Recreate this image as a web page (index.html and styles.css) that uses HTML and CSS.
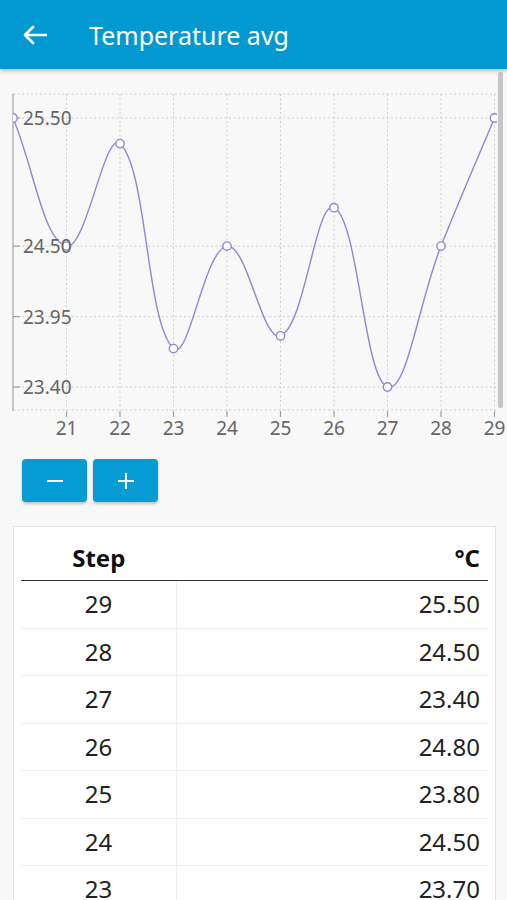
FILE: index.html
```html
<!DOCTYPE html>
<html lang="en">

<head>
    <meta charset="UTF-8">
    <meta name="viewport" content="width=device-width, initial-scale=1.0">
    <title>Temperature avg</title>

    <link rel="stylesheet" href="styles.css">
</head>

<body>
    <header class="topbar">
        <svg class="back-icon" width="24" height="20" viewBox="0 0 24 20" aria-label="Back">
            <path d="M2 10H23M10 2L2 10L10 18" />
        </svg>
        <h1 class="title">Temperature avg</h1>
    </header>

    <main class="content">
        <!-- chart: x 20..29 -> 13..494.5, y 25.5 -> 118, 23.4 -> 387 -->
        <svg class="chart" width="507" height="376" viewBox="0 69 507 376">
            <defs>
                <clipPath id="plotClip">
                    <rect x="13" y="69" width="484" height="376" />
                </clipPath>
            </defs>

            <g class="grid">
                <line x1="13" y1="94" x2="496" y2="94" />
                <line x1="13" y1="118" x2="496" y2="118" />
                <line x1="13" y1="246.1" x2="496" y2="246.1" />
                <line x1="13" y1="316.6" x2="496" y2="316.6" />
                <line x1="13" y1="387" x2="496" y2="387" />
                <line x1="13" y1="410" x2="496" y2="410" />
                <line x1="66.5" y1="94" x2="66.5" y2="410" />
                <line x1="120" y1="94" x2="120" y2="410" />
                <line x1="173.5" y1="94" x2="173.5" y2="410" />
                <line x1="227" y1="94" x2="227" y2="410" />
                <line x1="280.5" y1="94" x2="280.5" y2="410" />
                <line x1="334" y1="94" x2="334" y2="410" />
                <line x1="387.5" y1="94" x2="387.5" y2="410" />
                <line x1="441" y1="94" x2="441" y2="410" />
                <line x1="494.5" y1="94" x2="494.5" y2="410" />
            </g>

            <line class="axis" x1="13" y1="94" x2="13" y2="411" />
            <g class="ticks">
                <line x1="13" y1="118" x2="20" y2="118" />
                <line x1="13" y1="246.1" x2="20" y2="246.1" />
                <line x1="13" y1="316.6" x2="20" y2="316.6" />
                <line x1="13" y1="387" x2="20" y2="387" />
                <line x1="66.5" y1="411" x2="66.5" y2="417" />
                <line x1="120" y1="411" x2="120" y2="417" />
                <line x1="173.5" y1="411" x2="173.5" y2="417" />
                <line x1="227" y1="411" x2="227" y2="417" />
                <line x1="280.5" y1="411" x2="280.5" y2="417" />
                <line x1="334" y1="411" x2="334" y2="417" />
                <line x1="387.5" y1="411" x2="387.5" y2="417" />
                <line x1="441" y1="411" x2="441" y2="417" />
                <line x1="494.5" y1="411" x2="494.5" y2="417" />
            </g>

            <g class="series" clip-path="url(#plotClip)">
                <path class="series-line" d="M13,118 C34.4,169.2 43.2,240.5 66.5,246.1 C86,250.8 104.9,129.1 120,143.6 C147.7,170.1 145.8,322.1 173.5,348.6 C188.6,363.1 204.5,248.8 227,246.1 C247.3,243.7 262.1,342.4 280.5,335.8 C304.9,327 315.8,199 334,207.7 C358.6,219.5 363.8,378.5 387.5,387 C406.6,393.9 418.7,302.1 441,246.1 C461.5,194.5 473.1,169.2 494.5,118" />
                <circle cx="13" cy="118" r="4.2" />
                <circle cx="66.5" cy="246.1" r="4.2" />
                <circle cx="120" cy="143.6" r="4.2" />
                <circle cx="173.5" cy="348.6" r="4.2" />
                <circle cx="227" cy="246.1" r="4.2" />
                <circle cx="280.5" cy="335.8" r="4.2" />
                <circle cx="334" cy="207.7" r="4.2" />
                <circle cx="387.5" cy="387" r="4.2" />
                <circle cx="441" cy="246.1" r="4.2" />
                <circle cx="494.5" cy="118" r="4.2" />
            </g>

            <g class="y-labels">
                <text x="23" y="125.3">25.50</text>
                <text x="23" y="253.2">24.50</text>
                <text x="23" y="323.6">23.95</text>
                <text x="23" y="394">23.40</text>
            </g>
            <g class="x-labels">
                <text x="66.5" y="435">21</text>
                <text x="120" y="435">22</text>
                <text x="173.5" y="435">23</text>
                <text x="227" y="435">24</text>
                <text x="280.5" y="435">25</text>
                <text x="334" y="435">26</text>
                <text x="387.5" y="435">27</text>
                <text x="441" y="435">28</text>
                <text x="494.5" y="435">29</text>
            </g>
        </svg>

        <div class="zoom-buttons">
            <button type="button" class="zoom-btn" aria-label="Zoom out">
                <svg width="16" height="16" viewBox="0 0 16 16"><path d="M0 8H16" /></svg>
            </button>
            <button type="button" class="zoom-btn" aria-label="Zoom in">
                <svg width="16" height="16" viewBox="0 0 16 16"><path d="M0 8H16M8 0V16" /></svg>
            </button>
        </div>

        <div class="table-card">
            <table class="data-table">
                <thead>
                    <tr>
                        <th class="col-step">Step</th>
                        <th class="col-value">°C</th>
                    </tr>
                </thead>
                <tbody>
                    <tr><td class="col-step">29</td><td class="col-value">25.50</td></tr>
                    <tr><td class="col-step">28</td><td class="col-value">24.50</td></tr>
                    <tr><td class="col-step">27</td><td class="col-value">23.40</td></tr>
                    <tr><td class="col-step">26</td><td class="col-value">24.80</td></tr>
                    <tr><td class="col-step">25</td><td class="col-value">23.80</td></tr>
                    <tr><td class="col-step">24</td><td class="col-value">24.50</td></tr>
                    <tr><td class="col-step">23</td><td class="col-value">23.70</td></tr>
                </tbody>
            </table>
        </div>
    </main>

    <div class="scroll-thumb"></div>
</body>

</html>
```

FILE: styles.css
```css
body {
    margin: 0;
    background-color: #f8f8f8;
    font-family: "Noto Sans", "Open Sans", sans-serif;
    color: #222;
    overflow: hidden;
}

.topbar {
    position: relative;
    z-index: 2;
    height: 69px;
    display: flex;
    align-items: center;
    background-color: #0299d0;
    box-shadow: 0 2px 4px rgba(0, 0, 0, 0.25);
}

.back-icon {
    margin-left: 23px;
    fill: none;
    stroke: #fff;
    stroke-width: 2.6;
    stroke-linecap: round;
    stroke-linejoin: round;
}

.title {
    margin: 0 0 0 42px;
    font-size: 25px;
    font-weight: normal;
    color: #fff;
}

.chart {
    display: block;
}

.grid line {
    stroke: #cfcfcf;
    stroke-width: 1;
    stroke-dasharray: 2 2.5;
}

.axis {
    stroke: #b4b4b4;
    stroke-width: 1.5;
}

.ticks line {
    stroke: #a0a0a0;
    stroke-width: 1.2;
}

.series-line {
    fill: none;
    stroke: #8c88da;
    stroke-width: 1.4;
}

.series circle {
    fill: #fff;
    stroke: #8c88da;
    stroke-width: 1.4;
}

.y-labels text,
.x-labels text {
    font-family: "Noto Sans", "Open Sans", sans-serif;
    font-size: 19px;
    fill: #666;
}

.x-labels text {
    text-anchor: middle;
}

.zoom-buttons {
    display: flex;
    gap: 6px;
    margin: 14px 0 0 22px;
}

.zoom-btn {
    width: 65px;
    height: 43px;
    padding: 0;
    border: none;
    border-radius: 4px;
    background-color: #069bd3;
    box-shadow: 0 2px 3px rgba(0, 0, 0, 0.22);
    display: flex;
    align-items: center;
    justify-content: center;
}

.zoom-btn svg {
    stroke: #fff;
    stroke-width: 2;
}

.table-card {
    margin: 24px 11px 0 13px;
    padding: 0 7px;
    background-color: #fff;
    border: 1px solid #e4e4e4;
}

.data-table {
    width: 100%;
    border-collapse: collapse;
    font-size: 24px;
}

.data-table th {
    padding: 16px 8px 8px;
    line-height: 29px;
    font-weight: bold;
    color: #111;
    border-bottom: 1.5px solid #333;
}

.data-table td {
    padding: 8px;
    line-height: 30.5px;
    border-bottom: 1px solid #eee;
}

.col-step {
    width: 139px;
    text-align: center;
}

td.col-step {
    border-right: 1px solid #eee;
}

.col-value {
    text-align: right;
}

.scroll-thumb {
    position: absolute;
    top: 72px;
    left: 498px;
    width: 5px;
    height: 336px;
    border-radius: 3px;
    background-color: #c6c6c6;
}
```
